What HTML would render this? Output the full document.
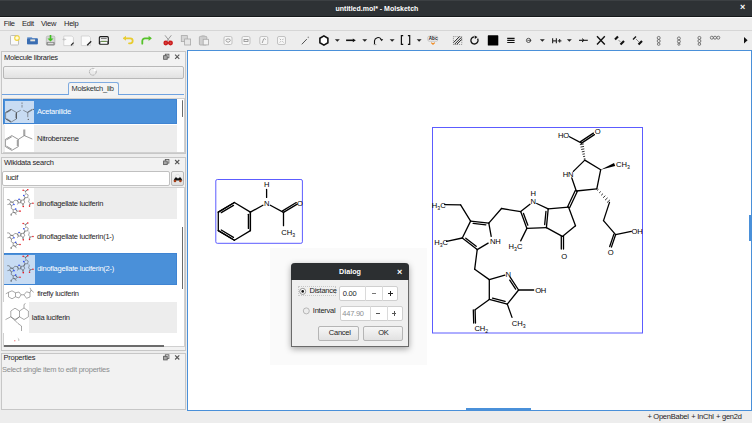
<!DOCTYPE html>
<html><head><meta charset="utf-8">
<style>
*{margin:0;padding:0;box-sizing:border-box}
html,body{width:752px;height:423px;overflow:hidden;background:#ededed;font-family:"Liberation Sans",sans-serif;font-size:7.5px;letter-spacing:-0.25px;color:#1f2326}
.a{position:absolute}
svg{letter-spacing:0}
.t{position:absolute;white-space:pre;line-height:10px}
#title{left:0;top:0;width:752px;height:17px;background:#2e3235;border-top:1px solid #3c4043;border-bottom:1px solid #16191a}
#menu{left:0;top:17px;width:752px;height:14px;background:#ededed;border-top:1px solid #fafafa;border-bottom:1px solid #d6d6d6}
#tool{left:0;top:31px;width:752px;height:19px;background:#ededed}
#canvas{left:187px;top:50px;width:565px;height:361px;background:#fff;border:1px solid #4a90d9}
.hdr{position:absolute;white-space:pre;line-height:10px;color:#1f2326}
.frame{position:absolute;border:1px solid #c7c7c7;background:#f2f2f2}
.sel{background:#4a90d9;color:#fff;border:1px solid #3f84d2}
</style></head><body>
<div id="title" class="a"></div>
<div class="t" style="left:335.5px;top:3.6px;color:#fff;font-weight:bold;font-size:7px;letter-spacing:0">untitled.mol* - Molsketch</div>
<div class="t" style="left:740px;top:2px;color:#fff;font-weight:bold;font-size:9px">×</div>

<div id="menu" class="a"></div>
<div class="t" style="left:3.7px;top:19.2px">File</div>
<div class="t" style="left:22px;top:19.2px">Edit</div>
<div class="t" style="left:41px;top:19.2px">View</div>
<div class="t" style="left:64px;top:19.2px">Help</div>

<div id="tool" class="a"></div>
<svg class="a" style="left:0;top:0" width="752" height="423" viewBox="0 0 752 423">
<!-- 1 new -->
<rect x="10.5" y="35.5" width="8" height="9.5" rx="0.8" fill="#fafafa" stroke="#bdbdbd" stroke-width="1"/>
<circle cx="17" cy="38.1" r="2.3" fill="#fffbe0" stroke="#f2d43a" stroke-width="1.1"/>
<!-- 2 open -->
<path d="M27.2 37.2 h4.6 l0.8 1 h5 v6 h-10.4z" fill="#6a96d0"/>
<rect x="27" y="38.4" width="10.8" height="5.8" rx="0.8" fill="#3a6db2"/>
<rect x="30.3" y="39.4" width="4.8" height="1.9" fill="#e6e4dc"/>
<!-- 3 save -->
<rect x="46.3" y="36" width="8.6" height="9.4" rx="1.5" fill="#d5d5d5" stroke="#aaa" stroke-width="0.6"/>
<rect x="46.5" y="42" width="8.2" height="3.3" rx="0.8" fill="#8a8a8a"/>
<rect x="47.8" y="42.8" width="5.6" height="1.4" fill="#ddd"/>
<path d="M49.7 35 h1.6 v3.6 h2.2 l-3 3 l-3 -3 h2.2z" fill="#40c020"/>
<!-- 4 export -->
<path d="M63.8 36 h8 l1.6 1.6 v8 h-9.6z" fill="#fbfbfb" stroke="#c8c8c8" stroke-width="0.7"/>
<path d="M63 39.4 h3.2 M64.2 38.2 l-1.2 1.2 l1.2 1.2" stroke="#bbb" stroke-width="0.8" fill="none"/>
<path d="M71 45.3 l2.6 -2.6" stroke="#222" stroke-width="1.2"/>
<!-- 5 doc pencil -->
<path d="M81.3 36 h7.6 l1.6 1.6 v8 h-9.2z" fill="#fbfbfb" stroke="#c8c8c8" stroke-width="0.7"/>
<path d="M87.2 45.3 l4 -4" stroke="#222" stroke-width="1.3"/>
<!-- 6 print -->
<rect x="98.8" y="36.1" width="10.1" height="8.7" rx="1.6" fill="#1c1c1c"/>
<rect x="99.9" y="37.3" width="7.9" height="4.2" rx="0.6" fill="#ececec"/>
<rect x="101" y="38.2" width="5.7" height="0.7" fill="#555"/>
<rect x="101.2" y="40.9" width="5.3" height="0.7" fill="#5a9a2a"/>
<rect x="100.3" y="42" width="7.1" height="1.8" fill="#fafafa"/>
<!-- 7 undo -->
<path d="M124 38.3 h6.2 a2.5 2.5 0 0 1 0 5 h-1.2" fill="none" stroke="#e8cc30" stroke-width="1.8" stroke-linecap="round"/>
<path d="M123 38.3 l3 -2.5 v5z" fill="#e8cc30"/>
<!-- 8 redo -->
<path d="M150.5 38.3 h-5.6 a2.6 2.6 0 0 0 -2.6 2.6 v2.8" fill="none" stroke="#56c22a" stroke-width="1.8" stroke-linecap="round"/>
<path d="M151.6 38.3 l-3 -2.6 v5.2z" fill="#56c22a"/>
<!-- 9 scissors -->
<path d="M165 35.3 l4.3 5.6 M171.3 35.3 l-4.3 5.6" stroke="#9a9a9a" stroke-width="1"/>
<circle cx="165.8" cy="43" r="1.7" fill="none" stroke="#cc1c1c" stroke-width="1.4"/>
<circle cx="170.5" cy="43" r="1.7" fill="none" stroke="#cc1c1c" stroke-width="1.4"/>
<rect x="164" y="42.2" width="8.3" height="1.6" fill="#cc1c1c"/>
<!-- 10 copy -->
<rect x="181.3" y="35.6" width="6" height="6" fill="#d6d6d6" stroke="#a8a8a8" stroke-width="0.8"/>
<rect x="184.6" y="39" width="6" height="6" fill="#e6e6e6" stroke="#a8a8a8" stroke-width="0.8"/>
<!-- 11 paste -->
<rect x="199.4" y="36.4" width="7.4" height="8.6" rx="0.8" fill="#cfcfcf" stroke="#a8a8a8" stroke-width="0.8"/>
<rect x="201.5" y="35.3" width="3.2" height="1.8" fill="#bdbdbd"/>
<rect x="203.2" y="39.3" width="5.4" height="5.6" fill="#f2f2f2" stroke="#a8a8a8" stroke-width="0.8"/>
<!-- 12-15 rounded squares -->
<g fill="#f6f6f6" stroke="#bcbcbc" stroke-width="0.9">
<rect x="224" y="36.5" width="8" height="8" rx="1.5"/>
<rect x="242" y="36.5" width="8" height="8" rx="1.5"/>
<rect x="259.8" y="36.5" width="8" height="8" rx="1.5"/>
<rect x="277.5" y="36.5" width="8" height="8" rx="1.5"/>
</g>
<g fill="none" stroke="#8a8a8a" stroke-width="0.8">
<path d="M225.8 40.5 a2.3 1.6 0 0 1 4.6 0 M225.8 40.8 l2.3 1.6 l2.3 -1.6"/>
<rect x="244" y="39.5" width="4" height="2"/>
<path d="M262.2 43 l1.4 -4 a1.2 1.2 0 0 1 2 0.6"/>
<path d="M279.8 38.8 l1 1 M283.5 38.8 l-1 1 M279.8 42.4 l1 -1 M283.5 42.4 l-1 -1"/>
</g>
<!-- 16 wand -->
<path d="M301.8 44.3 l5 -5.2" stroke="#505050" stroke-width="1"/>
<circle cx="308.3" cy="37.4" r="0.8" fill="#9a9a9a"/>
<!-- 17 hexagon -->
<path d="M323.9 35.9 l4 2.3 v4.6 l-4 2.3 l-4 -2.3 v-4.6z" fill="#fff" stroke="#111" stroke-width="1.6"/>
<path d="M334.9 39.2 h4.9 l-2.45 2.5z" fill="#222"/>
<!-- 18 arrow -->
<path d="M346.1 40.3 h7.5" stroke="#111" stroke-width="1.6"/>
<path d="M355.8 40.3 l-3 -1.9 v3.8z" fill="#111"/>
<path d="M362.3 39.2 h4.9 l-2.45 2.5z" fill="#222"/>
<!-- 19 curved arrow -->
<path d="M374.5 44 v-3.2 a3.6 3.6 0 0 1 6.6 -1.6" fill="none" stroke="#111" stroke-width="1.1"/>
<path d="M383.2 39.3 l-3.2 -0.4 l1.6 2.4z" fill="#111"/>
<path d="M373.8 44.6 h0.8 M375.4 44.6 h0.8" stroke="#333" stroke-width="0.8"/>
<path d="M389.7 39.2 h4.9 l-2.45 2.5z" fill="#222"/>
<!-- 20 brackets -->
<path d="M403.2 35.6 h-1.8 v8.8 h1.8 M407.9 35.6 h1.8 v8.8 h-1.8" fill="none" stroke="#111" stroke-width="1.2"/>
<path d="M416.7 39.2 h4.9 l-2.45 2.5z" fill="#222"/>
<!-- 21 Abc -->
<rect x="427.9" y="36.2" width="9.8" height="5" rx="1.2" fill="#f4f4f4" stroke="#aaa" stroke-width="0.6"/>
<text x="428.8" y="40.4" font-size="4.6" font-weight="bold" fill="#222" font-family="Liberation Sans">Abc</text>
<path d="M431.2 42.6 l1.8 1.6 l1.8 -1.6" fill="none" stroke="#f08a20" stroke-width="1.1"/>
<!-- 22 hatched -->
<rect x="453.4" y="36.6" width="8.4" height="7.9" fill="none" stroke="#666" stroke-width="0.7" stroke-dasharray="1,1"/>
<path d="M453.6 42.5 l6 -6 M454.5 44.3 l7 -7 M456.8 44.3 l5 -5" stroke="#111" stroke-width="0.9"/>
<!-- 23 rotate -->
<path d="M477.6 38.6 a3.6 3.6 0 1 1 -3.5 -1.8" fill="none" stroke="#111" stroke-width="1.3"/>
<path d="M474.5 35.6 l3 1.4 l-2.6 2z" fill="#111"/>
<!-- 24 black square -->
<rect x="487.8" y="35.3" width="10.5" height="10.3" rx="0.6" fill="#000"/>
<!-- 25 lines -->
<path d="M507.2 38.4 h7.4 M507.2 40.4 h7.4 M507.2 42.5 h7.4" stroke="#111" stroke-width="1.1"/>
<!-- 26 -->
<circle cx="528.5" cy="40.4" r="2.1" fill="none" stroke="#333" stroke-width="0.8"/>
<path d="M527.3 40.4 h4 M529.8 39.3 l1.2 1.1 l-1.2 1.1" fill="none" stroke="#333" stroke-width="0.7"/>
<path d="M539.9 39.2 h4.9 l-2.45 2.5z" fill="#222"/>
<!-- 27 H+ -->
<path d="M552.6 38.3v4.9M556.4 38.3v4.9M552.6 40.8h3.8M557.8 40.8h3.6M559.6 39v3.6" stroke="#333" stroke-width="1.2" fill="none"/>
<path d="M566.9 39.2 h4.9 l-2.45 2.5z" fill="#222"/>
<!-- 28 -->
<path d="M579 40.3 h8.8" stroke="#111" stroke-width="1.1"/>
<path d="M582 38.6 l2 1.7 l-2 1.7" fill="none" stroke="#111" stroke-width="1"/>
<!-- 29 X -->
<path d="M597 36.2 l7.8 8.2 M604.8 36.2 l-7.8 8.2" stroke="#111" stroke-width="1.4"/>
<!-- 30, 31 bond icons -->
<g stroke="#111">
<path d="M615 39.5 l3 -3" stroke-width="2.2"/><path d="M618.5 40 l2 2" stroke-width="0.8" stroke-dasharray="0.8,0.6"/><path d="M620.5 44.5 l3.5 -3.5" stroke-width="2.2"/>
<path d="M633 39.5 l3 -3" stroke-width="1.2"/><path d="M636 39 l2.5 2.5" stroke-width="0.8" stroke-dasharray="0.8,0.6"/><path d="M638.5 44.5 l3.5 -3.5" stroke-width="2.2"/>
</g>
<!-- 32-35 small glyphs -->
<g fill="none" stroke="#555" stroke-width="0.75">
<circle cx="658.7" cy="37.9" r="1.5"/><circle cx="658.7" cy="41" r="1.5"/><circle cx="658.7" cy="44.1" r="1.3"/>
<circle cx="678.9" cy="38.4" r="1.5"/><circle cx="678.9" cy="41.5" r="1.5"/><circle cx="678.9" cy="44.2" r="1.1"/>
<circle cx="699.4" cy="37.9" r="1.5"/><circle cx="699.4" cy="41" r="1.5"/><circle cx="699.4" cy="44.1" r="1.3"/>
<circle cx="711.8" cy="37.7" r="1.5"/><circle cx="715" cy="37.7" r="1.5"/><circle cx="718.3" cy="37.7" r="1.5"/>
</g>
<!-- 36 arrow right -->
<path d="M744 37 l3.6 3.3 l-3.6 3.3z" fill="#111"/>
</svg>

<!-- left dock -->
<div class="frame" style="left:1px;top:51px;width:185px;height:103px"></div>
<div class="hdr" style="left:4px;top:52.5px">Molecule libraries</div>
<div class="a" style="left:2.5px;top:65.5px;width:181.5px;height:13px;border:1px solid #b8b8b8;border-radius:2px;background:linear-gradient(#f4f4f4,#e2e2e2)"></div>
<div class="a" style="left:67.6px;top:82.1px;width:51.3px;height:13px;border:1px solid #7fabe0;border-bottom:none;border-radius:2.5px 2.5px 0 0;background:#f4f4f4"></div>
<div class="t" style="left:71.5px;top:84px;color:#2e3436">Molsketch_lib</div>
<div class="a" style="left:2px;top:94.1px;width:66.2px;height:1px;background:#6fa2e0"></div><div class="a" style="left:118px;top:94.1px;width:66.2px;height:1px;background:#6fa2e0"></div>
<div class="a" style="left:2.5px;top:97.5px;width:182px;height:55px;background:#fff;border:1px solid #d0d0d0"></div>
<div class="a sel" style="left:3.3px;top:98.8px;width:174px;height:25.4px"></div>
<div class="a" style="left:4.6px;top:101px;width:29.6px;height:21.8px;background:#c8dcf3"></div>
<div class="t" style="left:37px;top:106.5px;color:#fff">Acetanilide</div>
<div class="a" style="left:3.3px;top:125px;width:174px;height:27px;background:#ededed"></div>
<div class="a" style="left:4.5px;top:125px;width:29.6px;height:27px;background:#fff"></div>
<div class="t" style="left:37px;top:133.5px">Nitrobenzene</div>
<div class="a" style="left:181.6px;top:100px;width:1.8px;height:16.5px;background:#6b6b6b;border-radius:1px"></div>

<div class="frame" style="left:1px;top:156.5px;width:185px;height:194px"></div>
<div class="hdr" style="left:4px;top:157.5px">Wikidata search</div>
<div class="a" style="left:2.3px;top:170.6px;width:168px;height:15.2px;background:#fff;border:1px solid #c0c0c0;border-radius:2px"></div>
<div class="t" style="left:6px;top:173px;color:#222">lucif</div>
<div class="a" style="left:170.7px;top:170.6px;width:13.5px;height:15.2px;border:1px solid #b8b8b8;border-radius:2px;background:linear-gradient(#f4f4f4,#e0e0e0)"></div>
<div class="a" style="left:2.5px;top:187px;width:182px;height:160px;background:#fff;border:1px solid #d0d0d0"></div>
<div class="a" style="left:3.9px;top:188px;width:173.4px;height:31px;background:#ededed"></div>
<div class="a" style="left:4.1px;top:188px;width:30.2px;height:31px;background:#fff"></div>
<div class="t" style="left:37px;top:199px">dinoflagellate luciferin</div>
<div class="t" style="left:37px;top:232px">dinoflagellate luciferin(1-)</div>
<div class="a sel" style="left:3.9px;top:253.3px;width:173.4px;height:31.7px"></div>
<div class="a" style="left:4.4px;top:254.9px;width:30.2px;height:29.2px;background:#c8dcf3"></div>
<div class="t" style="left:37.2px;top:264.3px;color:#fff">dinoflagellate luciferin(2-)</div>
<div class="t" style="left:37.2px;top:289px">firefly luciferin</div>
<div class="a" style="left:3.3px;top:302.2px;width:174px;height:30.6px;background:#ededed"></div>
<div class="a" style="left:3.3px;top:302.2px;width:25.6px;height:30.6px;background:#fff"></div>
<div class="t" style="left:31.8px;top:313.3px">latia luciferin</div>
<div class="a" style="left:3.6px;top:345px;width:160.8px;height:1.6px;background:#6b6b6b"></div>
<div class="a" style="left:181.8px;top:226.7px;width:1.6px;height:62px;background:#6b6b6b"></div>

<div class="frame" style="left:1px;top:352.5px;width:185px;height:57.5px"></div>
<div class="hdr" style="left:3.5px;top:353px">Properties</div>
<div class="t" style="left:2px;top:364.5px;color:#8b8e8f">Select single item to edit properties</div>

<!--EXTRAS--><svg class="a" style="left:0;top:0" width="752" height="423" viewBox="0 0 752 423"><path d="M7.12 199.62L9.28 199.66M9.28 199.66L10.63 201.85M10.63 201.85L13.09 202.12M10.97 202.16L12.69 202.35M13.09 202.12L13.41 203.91M13.00 204.82L11.52 205.70M11.52 205.70L9.51 204.13M11.39 205.25L9.98 204.15M9.51 204.13L10.63 201.85M9.51 204.13L7.39 204.58M13.09 202.12L14.80 200.15M14.80 200.15L17.39 200.57M17.39 200.57L18.64 199.58M19.56 199.47L21.11 200.20M17.39 200.57L18.23 202.83M17.77 200.81L18.36 202.40M18.23 202.83L20.86 202.73M21.11 200.20L20.86 202.73M20.80 200.55L20.63 202.32M18.23 202.83L17.39 204.52M21.11 200.20L23.86 199.97M23.86 199.97L24.79 202.48M24.79 202.48L23.02 203.91M23.02 203.91L20.86 202.73M22.88 203.91L22.88 205.62M23.17 203.91L23.17 205.62M23.99 200.04L25.03 197.85M23.73 199.91L24.77 197.72M24.90 197.78L24.29 196.03M24.50 195.14L26.05 193.61M26.05 193.61L28.19 194.91M28.19 194.91L27.67 197.49M27.67 197.49L24.90 197.78M26.08 193.44L25.96 193.46M26.04 193.11L25.87 193.14M26.00 192.77L25.78 192.81M25.97 192.44L25.70 192.49M25.93 192.11L25.61 192.17M25.90 191.77L25.52 191.84M25.86 191.44L25.43 191.52M25.62 191.32L23.98 190.45M25.62 191.32L27.34 190.17M25.48 191.12L27.21 189.97M27.77 197.68L27.86 197.60M28.03 198.01L28.16 197.88M28.29 198.34L28.47 198.17M28.56 198.66L28.78 198.45M28.82 198.99L29.09 198.74M29.08 199.32L29.40 199.02M29.38 199.32L28.57 201.78M28.57 201.78L30.21 203.68M30.21 203.68L29.64 205.36M29.98 203.61L29.41 205.28M30.21 203.68L32.33 203.24M11.52 205.70L11.18 208.34M11.18 208.34L13.16 209.75M13.16 209.75L15.25 209.15M15.97 209.41L17.11 211.15M15.91 209.82L16.71 211.04M17.11 211.15L15.59 213.05M15.59 213.05L13.16 212.42M15.29 212.70L13.59 212.25M13.16 212.42L13.16 209.75M17.11 211.15L19.15 211.15M15.59 213.05L16.22 214.85M13.16 212.42L11.24 213.82M11.24 213.82L11.29 215.61M11.00 213.83L11.05 215.61" stroke="#333" stroke-width="0.45" fill="none"/><circle cx="23.17" cy="190.25" r="0.8" fill="#e8141c"/><circle cx="27.78" cy="189.74" r="0.8" fill="#e8141c"/><circle cx="23.25" cy="206.55" r="0.8" fill="#e8141c"/><circle cx="29.53" cy="206.09" r="0.8" fill="#e8141c"/><circle cx="32.96" cy="203.19" r="0.8" fill="#e8141c"/><circle cx="20.00" cy="211.15" r="0.8" fill="#e8141c"/><circle cx="13.93" cy="204.53" r="0.8" fill="#2040f0"/><circle cx="19.07" cy="199.18" r="0.8" fill="#2040f0"/><circle cx="23.78" cy="195.48" r="0.8" fill="#2040f0"/><circle cx="15.71" cy="208.98" r="0.8" fill="#2040f0"/><path d="M7.12 232.92L9.28 232.96M9.28 232.96L10.63 235.15M10.63 235.15L13.09 235.42M10.97 235.46L12.69 235.65M13.09 235.42L13.41 237.21M13.00 238.12L11.52 239.00M11.52 239.00L9.51 237.43M11.39 238.55L9.98 237.45M9.51 237.43L10.63 235.15M9.51 237.43L7.39 237.88M13.09 235.42L14.80 233.45M14.80 233.45L17.39 233.87M17.39 233.87L18.64 232.88M19.56 232.77L21.11 233.50M17.39 233.87L18.23 236.13M17.77 234.11L18.36 235.70M18.23 236.13L20.86 236.03M21.11 233.50L20.86 236.03M20.80 233.85L20.63 235.62M18.23 236.13L17.39 237.82M21.11 233.50L23.86 233.27M23.86 233.27L24.79 235.78M24.79 235.78L23.02 237.21M23.02 237.21L20.86 236.03M22.88 237.21L22.88 238.92M23.17 237.21L23.17 238.92M23.99 233.34L25.03 231.15M23.73 233.21L24.77 231.02M24.90 231.09L24.29 229.33M24.50 228.44L26.05 226.91M26.05 226.91L28.19 228.21M28.19 228.21L27.67 230.79M27.67 230.79L24.90 231.09M26.08 226.74L25.96 226.76M26.04 226.41L25.87 226.44M26.00 226.07L25.78 226.11M25.97 225.74L25.70 225.79M25.93 225.41L25.61 225.47M25.90 225.07L25.52 225.15M25.86 224.74L25.43 224.82M25.62 224.62L23.98 223.75M25.62 224.62L27.34 223.47M25.48 224.42L27.21 223.27M27.77 230.98L27.86 230.90M28.03 231.31L28.16 231.18M28.29 231.64L28.47 231.47M28.56 231.96L28.78 231.75M28.82 232.29L29.09 232.04M29.08 232.62L29.40 232.32M29.38 232.62L28.57 235.08M28.57 235.08L30.21 236.98M30.21 236.98L29.64 238.66M29.98 236.91L29.41 238.58M30.21 236.98L32.33 236.54M11.52 239.00L11.18 241.64M11.18 241.64L13.16 243.05M13.16 243.05L15.25 242.45M15.97 242.71L17.11 244.45M15.91 243.12L16.71 244.34M17.11 244.45L15.59 246.35M15.59 246.35L13.16 245.72M15.29 246.00L13.59 245.55M13.16 245.72L13.16 243.05M17.11 244.45L19.15 244.45M15.59 246.35L16.22 248.15M13.16 245.72L11.24 247.12M11.24 247.12L11.29 248.91M11.00 247.13L11.05 248.91" stroke="#333" stroke-width="0.45" fill="none"/><circle cx="23.17" cy="223.55" r="0.8" fill="#e8141c"/><circle cx="27.78" cy="223.04" r="0.8" fill="#e8141c"/><circle cx="23.25" cy="239.85" r="0.8" fill="#e8141c"/><circle cx="29.53" cy="239.39" r="0.8" fill="#e8141c"/><circle cx="32.96" cy="236.49" r="0.8" fill="#e8141c"/><circle cx="20.00" cy="244.45" r="0.8" fill="#e8141c"/><circle cx="13.93" cy="237.84" r="0.8" fill="#2040f0"/><circle cx="19.07" cy="232.48" r="0.8" fill="#2040f0"/><circle cx="23.78" cy="228.78" r="0.8" fill="#2040f0"/><circle cx="15.71" cy="242.28" r="0.8" fill="#2040f0"/><path d="M7.12 265.72L9.28 265.76M9.28 265.76L10.63 267.95M10.63 267.95L13.09 268.22M10.97 268.26L12.69 268.45M13.09 268.22L13.41 270.01M13.00 270.92L11.52 271.80M11.52 271.80L9.51 270.23M11.39 271.35L9.98 270.25M9.51 270.23L10.63 267.95M9.51 270.23L7.39 270.68M13.09 268.22L14.80 266.25M14.80 266.25L17.39 266.67M17.39 266.67L18.64 265.68M19.56 265.57L21.11 266.30M17.39 266.67L18.23 268.93M17.77 266.91L18.36 268.50M18.23 268.93L20.86 268.83M21.11 266.30L20.86 268.83M20.80 266.65L20.63 268.42M18.23 268.93L17.39 270.62M21.11 266.30L23.86 266.07M23.86 266.07L24.79 268.58M24.79 268.58L23.02 270.01M23.02 270.01L20.86 268.83M22.88 270.01L22.88 271.71M23.17 270.01L23.17 271.71M23.99 266.14L25.03 263.95M23.73 266.01L24.77 263.82M24.90 263.88L24.29 262.13M24.50 261.24L26.05 259.71M26.05 259.71L28.19 261.01M28.19 261.01L27.67 263.59M27.67 263.59L24.90 263.88M26.08 259.54L25.96 259.56M26.04 259.21L25.87 259.24M26.00 258.87L25.78 258.91M25.97 258.54L25.70 258.59M25.93 258.21L25.61 258.27M25.90 257.87L25.52 257.94M25.86 257.54L25.43 257.62M25.62 257.42L23.98 256.55M25.62 257.42L27.34 256.27M25.48 257.22L27.21 256.07M27.77 263.78L27.86 263.70M28.03 264.11L28.16 263.98M28.29 264.44L28.47 264.27M28.56 264.76L28.78 264.55M28.82 265.09L29.09 264.84M29.08 265.42L29.40 265.12M29.38 265.42L28.57 267.88M28.57 267.88L30.21 269.78M30.21 269.78L29.64 271.46M29.98 269.71L29.41 271.38M30.21 269.78L32.33 269.34M11.52 271.80L11.18 274.44M11.18 274.44L13.16 275.85M13.16 275.85L15.25 275.25M15.97 275.51L17.11 277.25M15.91 275.92L16.71 277.14M17.11 277.25L15.59 279.15M15.59 279.15L13.16 278.52M15.29 278.80L13.59 278.35M13.16 278.52L13.16 275.85M17.11 277.25L19.15 277.25M15.59 279.15L16.22 280.95M13.16 278.52L11.24 279.92M11.24 279.92L11.29 281.70M11.00 279.93L11.05 281.71" stroke="#333" stroke-width="0.45" fill="none"/><circle cx="23.17" cy="256.35" r="0.8" fill="#e8141c"/><circle cx="27.78" cy="255.84" r="0.8" fill="#e8141c"/><circle cx="23.25" cy="272.65" r="0.8" fill="#e8141c"/><circle cx="29.53" cy="272.19" r="0.8" fill="#e8141c"/><circle cx="32.96" cy="269.28" r="0.8" fill="#e8141c"/><circle cx="20.00" cy="277.25" r="0.8" fill="#e8141c"/><circle cx="13.93" cy="270.63" r="0.8" fill="#2040f0"/><circle cx="19.07" cy="265.28" r="0.8" fill="#2040f0"/><circle cx="23.78" cy="261.58" r="0.8" fill="#2040f0"/><circle cx="15.71" cy="275.08" r="0.8" fill="#2040f0"/><path d="M16.51 112.56L16.51 118.85M11.07 109.30L16.51 112.56M16.51 118.85L11.07 122.12M11.07 122.12L5.60 118.85M5.60 118.85L5.60 112.56M5.60 112.56L11.07 109.30M5.60 112.56L11.07 109.30M6.61 112.76L10.76 110.28M11.07 122.12L5.60 118.85M10.76 121.14L6.61 118.66M16.51 112.56L16.51 118.85M15.83 113.32L15.83 118.10M16.51 112.56L20.77 110.25M23.28 110.25L27.77 112.67M22.02 104.85L22.02 107.57M27.77 112.67L32.43 109.84M27.45 112.14L32.11 109.32M27.77 112.67L27.77 117.19" stroke="#3a3a3a" stroke-width="0.5" fill="none"/><circle cx="22.02" cy="103.11" r="0.6" fill="#555"/><circle cx="33.28" cy="109.40" r="0.6" fill="#555"/><circle cx="28.28" cy="119.43" r="0.6" fill="#555"/><path d="M11.8 135.6L18.3 139.4L18.3 146.6L11.8 150.4L5.4 146.6L5.4 139.4Z M6.4 139.9L11.8 136.8 M6.4 146.1L11.8 149.2 M17.3 140L17.3 146 M18.3 139.4L24.3 135.6L32.3 139 M23.8 135.6L23.8 129.5 M24.8 135.6L24.8 129.5" stroke="#444" stroke-width="0.55" fill="none"/><path d="M5.8 293.8L8.5 292.3L12 290.8L15.5 292.8L15.5 296.8L12 298.8L8.5 296.8L8.5 292.3 M15.5 292.8L19 292 L21 294.8 L19 298 L15.5 296.8 M21 294.8H24 M24 294.8L26.5 291.8L30 292.8L30 297L26.5 298.3Z M30 292.8L31 290L33.7 292.3 M31 290L30 287.8" stroke="#555" stroke-width="0.5" fill="none"/><path d="M10.8 311L15 308.2L19.5 311L19.5 316.8L15 319.5L10.8 316.8Z M19.5 311L24 308L28.4 311L28.4 316.8L24 319.5L19.5 316.8 M24 308L24 304.5L25.5 303.5 M10.8 316.8L5.5 319.6 M10.8 316.8L15 320.5L19.5 316.8 M15 320.5L18 323.5L21.5 326L21.5 331" stroke="#555" stroke-width="0.5" fill="none"/><circle cx="14.8" cy="340.7" r="0.7" fill="#f08080"/><path d="M17.8 338.2l1 0.8v2" stroke="#888" stroke-width="0.5" fill="none"/><g stroke="#5a5a5a" fill="none" stroke-width="0.85"><rect x="165.3" y="54.2" width="3.6" height="3.6"/><rect x="163.6" y="55.7" width="3.6" height="3.6" fill="#a8a8a8"/></g><path d="M175.1 54.7l4.2 4.2M179.3 54.7l-4.2 4.2" stroke="#555" stroke-width="1.1"/><g stroke="#5a5a5a" fill="none" stroke-width="0.85"><rect x="165.3" y="159.5" width="3.6" height="3.6"/><rect x="163.6" y="161.0" width="3.6" height="3.6" fill="#a8a8a8"/></g><path d="M175.1 160.0l4.2 4.2M179.3 160.0l-4.2 4.2" stroke="#555" stroke-width="1.1"/><g stroke="#5a5a5a" fill="none" stroke-width="0.85"><rect x="165.3" y="354.8" width="3.6" height="3.6"/><rect x="163.6" y="356.3" width="3.6" height="3.6" fill="#a8a8a8"/></g><path d="M175.1 355.3l4.2 4.2M179.3 355.3l-4.2 4.2" stroke="#555" stroke-width="1.1"/><circle cx="92.8" cy="71.8" r="3.4" fill="none" stroke="#a0a0a0" stroke-width="0.9" stroke-dasharray="1.2,0.6"/><circle cx="94.8" cy="70" r="1.2" fill="#fff"/><path d="M175.6 177.2a1.6 2.2 0 0 1 2 -2.6a1.6 2.2 0 0 1 2 2.6" fill="#f4f4f4" stroke="#cfcfcf" stroke-width="0.5"/><path d="M173.6 180.6l1.6 -3.2h1.6l0.9 1h0.6l0.9 -1h1.6l1.6 3.2z" fill="#111"/><circle cx="175" cy="181" r="1.3" fill="#a33a12"/><circle cx="180.4" cy="181" r="1.3" fill="#a33a12"/></svg><!--/EXTRAS-->
<div id="canvas" class="a"></div>
<!--MOLS--><svg id="mols" class="a" style="left:0;top:0" width="752" height="423" viewBox="0 0 752 423"><rect x="432.5" y="127.5" width="210" height="205.5" fill="none" stroke="#5c5cff" stroke-width="1"/><rect x="215.8" y="179.5" width="86.6" height="63.8" rx="1.5" fill="none" stroke="#5c5cff" stroke-width="1"/><g stroke-linecap="round"><line x1="444.60" y1="204.60" x2="460.60" y2="204.90" stroke="#000" stroke-width="1.3"/><line x1="460.60" y1="204.90" x2="470.60" y2="221.10" stroke="#000" stroke-width="1.3"/><line x1="470.60" y1="221.10" x2="488.80" y2="223.10" stroke="#000" stroke-width="1.3"/><line x1="473.11" y1="223.39" x2="485.85" y2="224.79" stroke="#000" stroke-width="1.3"/><line x1="488.80" y1="223.10" x2="491.20" y2="236.37" stroke="#000" stroke-width="1.3"/><line x1="488.13" y1="243.10" x2="477.20" y2="249.60" stroke="#000" stroke-width="1.3"/><line x1="477.20" y1="249.60" x2="462.30" y2="238.00" stroke="#000" stroke-width="1.3"/><line x1="476.19" y1="246.28" x2="465.76" y2="238.16" stroke="#000" stroke-width="1.3"/><line x1="462.30" y1="238.00" x2="470.60" y2="221.10" stroke="#000" stroke-width="1.3"/><line x1="462.30" y1="238.00" x2="446.60" y2="241.30" stroke="#000" stroke-width="1.3"/><line x1="488.80" y1="223.10" x2="501.50" y2="208.50" stroke="#000" stroke-width="1.3"/><line x1="501.50" y1="208.50" x2="520.70" y2="211.60" stroke="#000" stroke-width="1.3"/><line x1="520.70" y1="211.60" x2="529.96" y2="204.28" stroke="#000" stroke-width="1.3"/><line x1="536.72" y1="203.50" x2="548.20" y2="208.90" stroke="#000" stroke-width="1.3"/><line x1="520.70" y1="211.60" x2="526.90" y2="228.40" stroke="#000" stroke-width="1.3"/><line x1="523.51" y1="213.43" x2="527.85" y2="225.19" stroke="#000" stroke-width="1.3"/><line x1="526.90" y1="228.40" x2="546.40" y2="227.60" stroke="#000" stroke-width="1.3"/><line x1="548.20" y1="208.90" x2="546.40" y2="227.60" stroke="#000" stroke-width="1.3"/><line x1="545.94" y1="211.51" x2="544.68" y2="224.60" stroke="#000" stroke-width="1.3"/><line x1="526.90" y1="228.40" x2="520.70" y2="240.90" stroke="#000" stroke-width="1.3"/><line x1="548.20" y1="208.90" x2="568.60" y2="207.20" stroke="#000" stroke-width="1.3"/><line x1="568.60" y1="207.20" x2="575.50" y2="225.80" stroke="#000" stroke-width="1.3"/><line x1="575.50" y1="225.80" x2="562.40" y2="236.40" stroke="#000" stroke-width="1.3"/><line x1="562.40" y1="236.40" x2="546.40" y2="227.60" stroke="#000" stroke-width="1.3"/><line x1="561.30" y1="236.40" x2="561.30" y2="249.00" stroke="#000" stroke-width="1.3"/><line x1="563.50" y1="236.40" x2="563.50" y2="249.00" stroke="#000" stroke-width="1.3"/><line x1="569.59" y1="207.67" x2="577.29" y2="191.47" stroke="#000" stroke-width="1.3"/><line x1="567.61" y1="206.73" x2="575.31" y2="190.53" stroke="#000" stroke-width="1.3"/><line x1="576.30" y1="191.00" x2="571.81" y2="177.98" stroke="#000" stroke-width="1.3"/><line x1="573.35" y1="171.39" x2="584.80" y2="160.10" stroke="#000" stroke-width="1.3"/><line x1="584.80" y1="160.10" x2="600.70" y2="169.70" stroke="#000" stroke-width="1.3"/><line x1="600.70" y1="169.70" x2="596.80" y2="188.80" stroke="#000" stroke-width="1.3"/><line x1="596.80" y1="188.80" x2="576.30" y2="191.00" stroke="#000" stroke-width="1.3"/><line x1="585.00" y1="158.80" x2="584.14" y2="158.97" stroke="#000" stroke-width="0.8"/><line x1="584.73" y1="156.34" x2="583.49" y2="156.57" stroke="#000" stroke-width="0.8"/><line x1="584.47" y1="153.88" x2="582.85" y2="154.18" stroke="#000" stroke-width="0.8"/><line x1="584.20" y1="151.41" x2="582.20" y2="151.79" stroke="#000" stroke-width="0.8"/><line x1="583.94" y1="148.95" x2="581.55" y2="149.40" stroke="#000" stroke-width="0.8"/><line x1="583.67" y1="146.48" x2="580.90" y2="147.00" stroke="#000" stroke-width="0.8"/><line x1="583.40" y1="144.02" x2="580.25" y2="144.61" stroke="#000" stroke-width="0.8"/><line x1="581.60" y1="143.10" x2="569.50" y2="136.70" stroke="#000" stroke-width="1.3"/><line x1="581.60" y1="143.10" x2="594.40" y2="134.60" stroke="#000" stroke-width="1.3"/><line x1="580.60" y1="141.60" x2="593.40" y2="133.10" stroke="#000" stroke-width="1.3"/><polygon points="600.70,169.70 615.17,165.90 614.03,162.90" fill="#000"/><line x1="597.53" y1="190.24" x2="598.19" y2="189.62" stroke="#000" stroke-width="0.8"/><line x1="599.48" y1="192.66" x2="600.47" y2="191.74" stroke="#000" stroke-width="0.8"/><line x1="601.43" y1="195.09" x2="602.75" y2="193.85" stroke="#000" stroke-width="0.8"/><line x1="603.38" y1="197.51" x2="605.04" y2="195.96" stroke="#000" stroke-width="0.8"/><line x1="605.33" y1="199.93" x2="607.32" y2="198.07" stroke="#000" stroke-width="0.8"/><line x1="607.28" y1="202.35" x2="609.60" y2="200.18" stroke="#000" stroke-width="0.8"/><line x1="609.50" y1="202.40" x2="603.50" y2="220.60" stroke="#000" stroke-width="1.3"/><line x1="603.50" y1="220.60" x2="615.60" y2="234.70" stroke="#000" stroke-width="1.3"/><line x1="615.60" y1="234.70" x2="611.40" y2="247.10" stroke="#000" stroke-width="1.3"/><line x1="613.90" y1="234.12" x2="609.70" y2="246.52" stroke="#000" stroke-width="1.3"/><line x1="615.60" y1="234.70" x2="631.30" y2="231.40" stroke="#000" stroke-width="1.3"/><line x1="477.20" y1="249.60" x2="474.70" y2="269.20" stroke="#000" stroke-width="1.3"/><line x1="474.70" y1="269.20" x2="489.30" y2="279.60" stroke="#000" stroke-width="1.3"/><line x1="489.30" y1="279.60" x2="504.83" y2="275.16" stroke="#000" stroke-width="1.3"/><line x1="510.12" y1="277.12" x2="518.60" y2="290.00" stroke="#000" stroke-width="1.3"/><line x1="509.73" y1="280.15" x2="515.66" y2="289.17" stroke="#000" stroke-width="1.3"/><line x1="518.60" y1="290.00" x2="507.30" y2="304.10" stroke="#000" stroke-width="1.3"/><line x1="507.30" y1="304.10" x2="489.30" y2="299.40" stroke="#000" stroke-width="1.3"/><line x1="505.11" y1="301.46" x2="492.51" y2="298.17" stroke="#000" stroke-width="1.3"/><line x1="489.30" y1="299.40" x2="489.30" y2="279.60" stroke="#000" stroke-width="1.3"/><line x1="518.60" y1="290.00" x2="533.70" y2="290.00" stroke="#000" stroke-width="1.3"/><line x1="507.30" y1="304.10" x2="512.00" y2="317.40" stroke="#000" stroke-width="1.3"/><line x1="489.30" y1="299.40" x2="475.10" y2="309.80" stroke="#000" stroke-width="1.3"/><line x1="475.10" y1="309.80" x2="475.50" y2="323.00" stroke="#000" stroke-width="1.3"/><line x1="473.30" y1="309.85" x2="473.70" y2="323.05" stroke="#000" stroke-width="1.3"/><line x1="250.40" y1="212.10" x2="250.40" y2="230.60" stroke="#000" stroke-width="1.3"/><line x1="234.40" y1="202.50" x2="250.40" y2="212.10" stroke="#000" stroke-width="1.3"/><line x1="250.40" y1="230.60" x2="234.40" y2="240.20" stroke="#000" stroke-width="1.3"/><line x1="234.40" y1="240.20" x2="218.30" y2="230.60" stroke="#000" stroke-width="1.3"/><line x1="218.30" y1="230.60" x2="218.30" y2="212.10" stroke="#000" stroke-width="1.3"/><line x1="218.30" y1="212.10" x2="234.40" y2="202.50" stroke="#000" stroke-width="1.3"/><line x1="218.30" y1="212.10" x2="234.40" y2="202.50" stroke="#000" stroke-width="1.3"/><line x1="221.26" y1="212.67" x2="233.49" y2="205.37" stroke="#000" stroke-width="1.3"/><line x1="234.40" y1="240.20" x2="218.30" y2="230.60" stroke="#000" stroke-width="1.3"/><line x1="233.49" y1="237.33" x2="221.26" y2="230.03" stroke="#000" stroke-width="1.3"/><line x1="250.40" y1="212.10" x2="250.40" y2="230.60" stroke="#000" stroke-width="1.3"/><line x1="248.40" y1="214.32" x2="248.40" y2="228.38" stroke="#000" stroke-width="1.3"/><line x1="250.40" y1="212.10" x2="262.91" y2="205.30" stroke="#000" stroke-width="1.3"/><line x1="270.30" y1="205.29" x2="283.50" y2="212.40" stroke="#000" stroke-width="1.3"/><line x1="266.60" y1="189.40" x2="266.60" y2="197.40" stroke="#000" stroke-width="1.3"/><line x1="283.50" y1="212.40" x2="297.20" y2="204.10" stroke="#000" stroke-width="1.3"/><line x1="282.57" y1="210.86" x2="296.27" y2="202.56" stroke="#000" stroke-width="1.3"/><line x1="283.50" y1="212.40" x2="283.50" y2="225.70" stroke="#000" stroke-width="1.3"/></g><g font-family="Liberation Sans" fill="#000"><text x="431.80" y="207.64" font-size="7.6">H<tspan font-size="5.17" dy="2">3</tspan><tspan dy="-2">C</tspan></text><text x="434.20" y="244.94" font-size="7.6">H<tspan font-size="5.17" dy="2">3</tspan><tspan dy="-2">C</tspan></text><text x="490.00" y="243.74" text-anchor="start" font-size="7.6" letter-spacing="-0.3">NH</text><text x="533.10" y="204.04" text-anchor="middle" font-size="7.6" letter-spacing="-0.3">N</text><text x="533.10" y="195.74" text-anchor="middle" font-size="7.6" letter-spacing="-0.3">H</text><text x="508.60" y="248.94" font-size="7.6">H<tspan font-size="5.17" dy="2">3</tspan><tspan dy="-2">C</tspan></text><text x="564.10" y="258.64" text-anchor="middle" font-size="7.6" letter-spacing="-0.3">O</text><text x="568.00" y="176.64" text-anchor="middle" font-size="7.6" letter-spacing="-0.3">HN</text><text x="563.50" y="137.94" text-anchor="middle" font-size="7.6" letter-spacing="-0.3">HO</text><text x="597.60" y="134.14" text-anchor="middle" font-size="7.6" letter-spacing="-0.3">O</text><text x="616.00" y="167.14" font-size="7.6">CH<tspan font-size="5.17" dy="2">3</tspan></text><text x="610.60" y="255.24" text-anchor="middle" font-size="7.6" letter-spacing="-0.3">O</text><text x="631.60" y="233.74" text-anchor="start" font-size="7.6" letter-spacing="-0.3">OH</text><text x="508.20" y="276.64" text-anchor="middle" font-size="7.6" letter-spacing="-0.3">N</text><text x="535.20" y="292.74" text-anchor="start" font-size="7.6" letter-spacing="-0.3">OH</text><text x="511.80" y="325.74" font-size="7.6">CH<tspan font-size="5.17" dy="2">3</tspan></text><text x="474.40" y="331.44" font-size="7.6">CH<tspan font-size="5.17" dy="2">2</tspan></text><text x="266.60" y="187.04" text-anchor="middle" font-size="7.6" letter-spacing="-0.3">H</text><text x="266.60" y="206.04" text-anchor="middle" font-size="7.6" letter-spacing="-0.3">N</text><text x="299.70" y="205.54" text-anchor="middle" font-size="7.6" letter-spacing="-0.3">O</text><text x="281.20" y="235.04" font-size="7.6">CH<tspan font-size="5.17" dy="2">3</tspan></text></g></svg><!--/MOLS-->
<!--DLG-->
<div class="a" style="left:269.5px;top:248px;width:157px;height:116.6px;background:#fafafa"></div>
<div class="a" style="left:291.2px;top:263px;width:117.5px;height:83.6px;background:#efefef;border:1px solid #6a6a6a;border-top:none;border-radius:4px 4px 0 0;box-shadow:0 2px 6px rgba(0,0,0,0.35)"></div>
<div class="a" style="left:291.2px;top:263px;width:117.5px;height:17.3px;background:#2c2f31;border-radius:4px 4px 0 0"></div>
<div class="t" style="left:339px;top:266.5px;color:#fff;font-weight:bold;font-size:7.2px;letter-spacing:0">Dialog</div>
<div class="t" style="left:397px;top:267px;color:#fff;font-weight:bold;font-size:9px;letter-spacing:0">×</div>
<div class="a" style="left:297.5px;top:285.6px;width:38.6px;height:10.8px;border:1px dotted #c8c8c8"></div>
<svg class="a" style="left:0;top:0" width="752" height="423"><circle cx="302.7" cy="291.4" r="3" fill="#fff" stroke="#8a8a8a" stroke-width="0.9"/><circle cx="302.7" cy="291.4" r="1.3" fill="#111"/><circle cx="306.3" cy="310.9" r="3" fill="#ececec" stroke="#b0b0b0" stroke-width="0.9"/></svg>
<div class="t" style="left:309.5px;top:286px;color:#222">Distance</div>
<div class="a" style="left:339.3px;top:285.8px;width:59.2px;height:15.7px;background:#fff;border:1px solid #cfcfcf;border-radius:2px"></div>
<div class="a" style="left:365.4px;top:286px;width:1px;height:15.4px;background:#dadada"></div>
<div class="a" style="left:381.5px;top:286px;width:1px;height:15.4px;background:#dadada"></div>
<div class="t" style="left:342.8px;top:288.5px;color:#222">0.00</div>
<div class="a" style="left:371.5px;top:293px;width:4.4px;height:0.9px;background:#777"></div>
<div class="a" style="left:388.2px;top:293px;width:4.4px;height:1.1px;background:#222"></div>
<div class="a" style="left:389.9px;top:291.3px;width:1.1px;height:4.4px;background:#222"></div>

<div class="t" style="left:312.8px;top:305.9px;color:#222">Interval</div>
<div class="a" style="left:339.6px;top:305.9px;width:63.3px;height:15.3px;background:#fff;border:1px solid #cfcfcf;border-radius:2px"></div>
<div class="a" style="left:369.6px;top:306px;width:1px;height:15px;background:#dadada"></div>
<div class="a" style="left:386.6px;top:306px;width:1px;height:15px;background:#dadada"></div>
<div class="t" style="left:342.3px;top:308.5px;color:#8e9192">447.90</div>
<div class="a" style="left:375.8px;top:313px;width:4.4px;height:0.9px;background:#555"></div>
<div class="a" style="left:391.9px;top:313px;width:4.4px;height:0.9px;background:#555"></div>
<div class="a" style="left:393.65px;top:311.25px;width:0.9px;height:4.4px;background:#555"></div>
<div class="a" style="left:318.4px;top:325.6px;width:40.4px;height:15.2px;border:1px solid #b5b5b5;border-radius:2px;background:linear-gradient(#f6f6f6,#e2e2e2)"></div>
<div class="t" style="left:328.8px;top:328px;color:#222">Cancel</div>
<div class="a" style="left:363.2px;top:325.6px;width:40.2px;height:15.2px;border:1px solid #b5b5b5;border-radius:2px;background:linear-gradient(#f6f6f6,#e2e2e2)"></div>
<div class="t" style="left:378.2px;top:328px;color:#222">OK</div>
<!--/DLG-->


<div class="a" style="left:466px;top:408.2px;width:65px;height:2.5px;background:#4a90d9"></div>
<div class="a" style="left:749px;top:215px;width:3px;height:25.7px;background:#4a90d9"></div>
<div class="t" style="left:647.4px;top:412px">+ OpenBabel</div><div class="t" style="left:691.3px;top:412px">+ InChI</div><div class="t" style="left:716px;top:412px">+ gen2d</div>
</body></html>
